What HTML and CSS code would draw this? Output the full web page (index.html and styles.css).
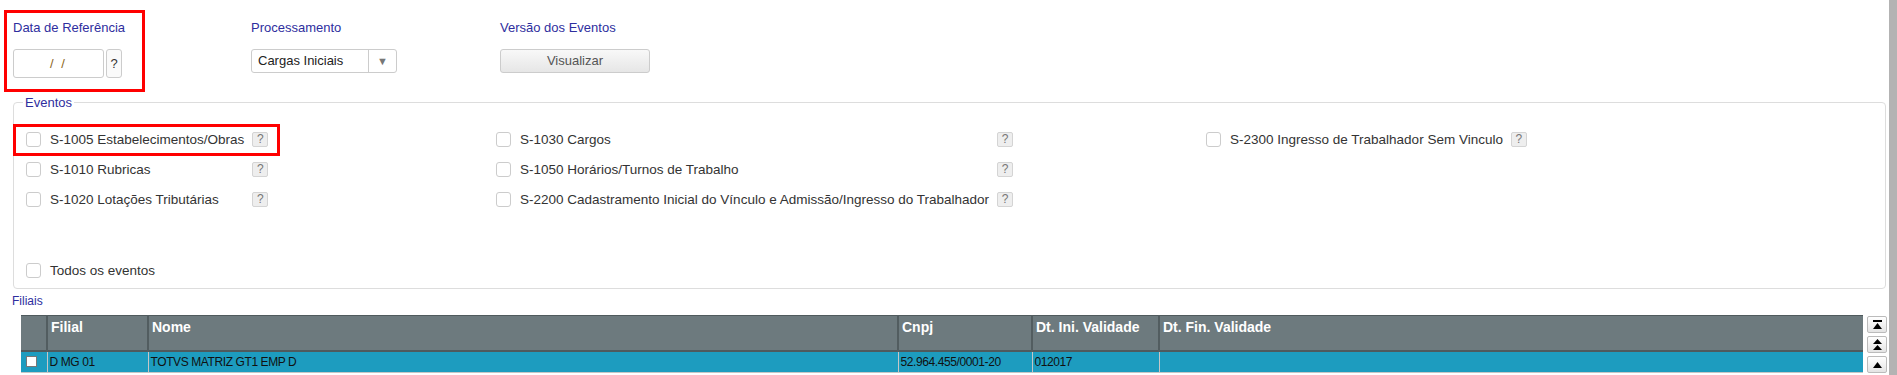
FILE: index.html
```html
<!DOCTYPE html>
<html lang="pt-BR">

<head>
  <meta charset="UTF-8">
  <title>Cargas Iniciais - eSocial</title>
  <link rel="stylesheet" href="styles.css">
</head>

<body>
  <div class="page">
    <div class="content">
      <div class="topBar">
        <div class="field fieldData">
          <div class="fieldLabel">Data de Referência</div>
          <div class="dateWrap">
            <div class="dateInput">/ /</div>
            <div class="helpBig">?</div>
          </div>
        </div>
        <div class="field fieldProc">
          <div class="fieldLabel">Processamento</div>
          <div class="selectBox">
            <span class="selectText">Cargas Iniciais</span>
            <span class="selectArrow">&#9660;</span>
          </div>
        </div>
        <div class="field">
          <div class="fieldLabel">Versão dos Eventos</div>
          <div class="btnVisualizar">Visualizar</div>
        </div>
      </div>

      <fieldset class="eventos">
        <legend>Eventos</legend>
        <div class="eventCols">
          <div class="eventCol col1">
            <span class="cb"></span><span class="evName">S-1005 Estabelecimentos/Obras</span><span class="help">?</span>
            <span class="cb"></span><span class="evName">S-1010 Rubricas</span><span class="help">?</span>
            <span class="cb"></span><span class="evName">S-1020 Lotações Tributárias</span><span class="help">?</span>
          </div>
          <div class="eventCol col2">
            <span class="cb"></span><span class="evName">S-1030 Cargos</span><span class="help">?</span>
            <span class="cb"></span><span class="evName">S-1050 Horários/Turnos de Trabalho</span><span class="help">?</span>
            <span class="cb"></span><span class="evName">S-2200 Cadastramento Inicial do Vínculo e Admissão/Ingresso do Trabalhador</span><span class="help">?</span>
          </div>
          <div class="eventCol">
            <span class="cb"></span><span class="evName">S-2300 Ingresso de Trabalhador Sem Vinculo</span><span class="help">?</span>
          </div>
        </div>
        <div class="todos">
          <span class="cb"></span><span class="evName">Todos os eventos</span>
        </div>
      </fieldset>

      <div class="filiaisLabel">Filiais</div>
      <div class="gridWrap">
        <table class="grid">
          <colgroup>
            <col class="cCheck">
            <col class="cFilial">
            <col class="cNome">
            <col class="cCnpj">
            <col class="cIni">
            <col>
          </colgroup>
          <thead>
            <tr>
              <th></th>
              <th>Filial</th>
              <th>Nome</th>
              <th>Cnpj</th>
              <th>Dt. Ini. Validade</th>
              <th>Dt. Fin. Validade</th>
            </tr>
          </thead>
          <tbody>
            <tr class="selected">
              <td><span class="rowCb"></span></td>
              <td>D MG 01</td>
              <td>TOTVS MATRIZ GT1 EMP D</td>
              <td>52.964.455/0001-20</td>
              <td>012017</td>
              <td></td>
            </tr>
          </tbody>
        </table>
        <div class="scrollBtns">
          <div class="scrollBtn">
            <svg width="11" height="10" viewBox="0 0 11 10"><rect x="1" y="0" width="9" height="2" fill="#000"/><polygon points="5.5,3 10,9 1,9" fill="#000"/></svg>
          </div>
          <div class="scrollBtn">
            <svg width="11" height="12" viewBox="0 0 11 12"><polygon points="5.5,0 10,5 1,5" fill="#000"/><polygon points="5.5,6 10,11 1,11" fill="#000"/></svg>
          </div>
          <div class="scrollBtn">
            <svg width="11" height="8" viewBox="0 0 11 8"><polygon points="5.5,1 10,7 1,7" fill="#000"/></svg>
          </div>
        </div>
      </div>
    </div>
    <div class="sideBar"></div>
  </div>

  <!-- marcacoes em vermelho -->
  <div class="mark markData"></div>
  <div class="mark markEvento"></div>
</body>

</html>
```

FILE: styles.css
```css
body {
  margin: 0;
  font-family: "Liberation Sans", Arial, sans-serif;
  font-size: 13px;
  color: #333;
  background-color: #fff;
}

.page {
  display: flex;
  min-height: 375px;
}

.content {
  flex: 1;
}

.sideBar {
  width: 8px;
  background-color: #b3b3b3;
}

/* topo */
.topBar {
  display: flex;
  padding: 20px 0 0 13px;
}

.fieldData {
  width: 238px;
}

.fieldProc {
  width: 249px;
}

.fieldLabel {
  color: #2e2e9e;
  line-height: 15px;
  height: 15px;
  margin-bottom: 14px;
}

.dateWrap {
  display: flex;
  gap: 2px;
}

.dateInput {
  width: 91px;
  height: 29px;
  box-sizing: border-box;
  border: 1px solid #ccc;
  border-radius: 3px;
  text-align: center;
  line-height: 27px;
  letter-spacing: 2px;
  color: #8a6420;
}

.helpBig {
  width: 16px;
  height: 29px;
  box-sizing: border-box;
  border: 1px solid #ccc;
  border-radius: 3px;
  background-color: #fafafa;
  text-align: center;
  line-height: 27px;
  color: #333;
}

.selectBox {
  display: flex;
  width: 146px;
  height: 24px;
  box-sizing: border-box;
  border: 1px solid #ccc;
  border-radius: 3px;
  line-height: 22px;
}

.selectText {
  width: 117px;
  padding-left: 6px;
  box-sizing: border-box;
  border-right: 1px solid #ccc;
  color: #222;
}

.selectArrow {
  flex: 1;
  text-align: center;
  font-size: 11px;
  color: #777;
}

.btnVisualizar {
  width: 150px;
  height: 24px;
  box-sizing: border-box;
  border: 1px solid #ccc;
  border-radius: 3px;
  background: linear-gradient(#f8f8f8, #e6e6e6);
  color: #555;
  text-align: center;
  line-height: 22px;
}

/* eventos */
.eventos {
  margin: 17px 3px 0 13px;
  border: 1px solid #ddd;
  border-radius: 4px;
  padding: 14px 0 3px 12px;
}

.eventos>legend {
  color: #2e2e9e;
  padding: 0 2px;
  margin-left: -3px;
  line-height: 15px;
}

.eventCols {
  display: flex;
}

.eventCol {
  display: grid;
  grid-template-columns: 15px auto auto;
  grid-auto-rows: 30px;
  column-gap: 8px;
  align-items: center;
  align-content: start;
  justify-content: start;
}

.col1 {
  width: 470px;
}

.col2 {
  width: 710px;
}

.cb {
  display: inline-block;
  width: 15px;
  height: 15px;
  box-sizing: border-box;
  border: 1px solid #ccc;
  border-radius: 3px;
  background-color: #fff;
}

.evName {
  margin-left: 1px;
  font-size: 13.5px;
  color: #333;
  white-space: nowrap;
}

.help {
  width: 16px;
  height: 15px;
  box-sizing: border-box;
  border: 1px solid #d4d4d4;
  border-radius: 2px;
  background-color: #eee;
  color: #777;
  font-size: 12px;
  line-height: 13px;
  text-align: center;
}

.todos {
  display: flex;
  align-items: center;
  gap: 8px;
  height: 30px;
  margin-top: 41px;
}

/* filiais */
.filiaisLabel {
  margin: 5px 0 0 12px;
  color: #2e2e9e;
  font-size: 12px;
  line-height: 15px;
}

.gridWrap {
  display: flex;
  gap: 4px;
  margin: 6px 2px 0 21px;
}

.grid {
  flex: 1;
  border-collapse: collapse;
  table-layout: fixed;
  font-size: 12px;
  letter-spacing: -0.4px;
}

.cCheck {
  width: 26px;
}

.cFilial {
  width: 101px;
}

.cNome {
  width: 750px;
}

.cCnpj {
  width: 134px;
}

.cIni {
  width: 127px;
}

.grid th {
  height: 35px;
  box-sizing: border-box;
  background-color: #6d7a7e;
  border-top: 1px solid #4f5a5d;
  border-left: 2px solid #525d60;
  color: #fff;
  font-size: 14px;
  font-weight: bold;
  letter-spacing: 0;
  text-align: left;
  vertical-align: top;
  padding: 3px 3px 0;
  white-space: nowrap;
}

.grid th:first-child {
  border-left: none;
}

.grid td {
  height: 20px;
  box-sizing: border-box;
  padding: 0 2px;
  border-left: 1px solid #c6c6c6;
  border-bottom: 1px solid #c6c6c6;
  border-top: 2px solid #4f5a5d;
  color: #111;
  white-space: nowrap;
}

.grid td:first-child {
  border-left: none;
  padding-left: 5px;
}

.selected td {
  background-color: #1d9cbf;
}

.rowCb {
  display: block;
  width: 11px;
  height: 11px;
  box-sizing: border-box;
  border: 1px solid #777;
  background-color: #fff;
}

.scrollBtns {
  display: flex;
  flex-direction: column;
  gap: 3px;
  padding-top: 1px;
}

.scrollBtn {
  display: flex;
  align-items: center;
  justify-content: center;
  width: 20px;
  height: 17px;
  box-sizing: border-box;
  border: 1px solid #bbb;
  border-radius: 2px;
  background: linear-gradient(#fff, #e4e4e4);
}

/* marcacoes */
.mark {
  position: absolute;
  box-sizing: border-box;
  border: 3px solid #f00;
}

.markData {
  left: 4px;
  top: 10px;
  width: 141px;
  height: 82px;
}

.markEvento {
  left: 13px;
  top: 124px;
  width: 267px;
  height: 32px;
}
```
